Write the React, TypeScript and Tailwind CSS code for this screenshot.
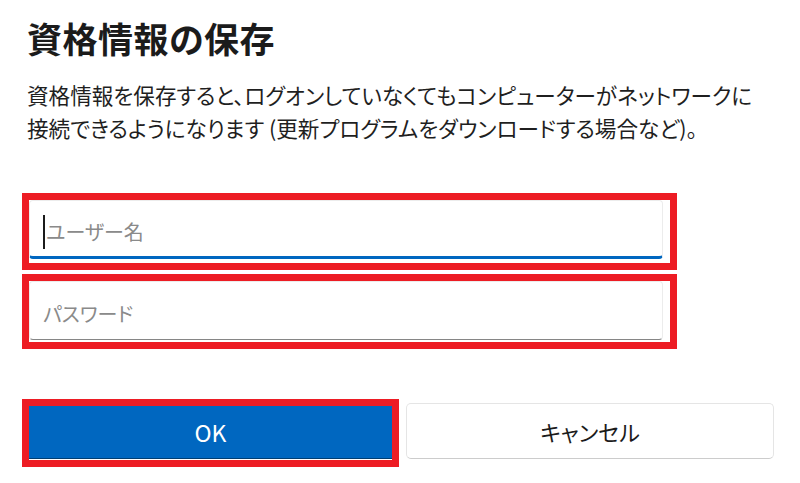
export default function App() {
  return (
    <div
      className="min-h-screen w-[800px] bg-white pl-[22px] pt-[14px] text-[#1b1b1b] [font-feature-settings:'palt']"
      style={{ fontFamily: '"Noto Sans CJK JP", "Noto Sans", sans-serif' }}
    >
      <h1 className="pl-[5px] text-[35px] font-semibold leading-[48px] tracking-[0.5px]">
        資格情報の保存
      </h1>

      <p className="mt-[16px] pl-[5px] text-[21.6px] leading-[33px] text-[#1f1f1f]">
        資格情報を保存すると、ログオンしていなくてもコンピューターがネットワークに
        <br />
        接続できるようになります (更新プログラムをダウンロードする場合など)。
      </p>

      <div className="mt-[49px] flex flex-col gap-[4px]">
        <div className="h-[77px] w-[655px] border-[7px] border-[#ed1c24] pr-[7px]">
          <div className="flex h-[59px] items-center rounded-[4px] border border-[#ececec] border-b-[3px] border-b-[#0067c0] pl-[13px] pt-[6px]">
            <span className="mr-[1px] h-[34px] w-[2px] bg-[#1b1b1b]" />
            <span className="text-[20px] text-[#8a8a8a]">ユーザー名</span>
          </div>
        </div>
        <div className="h-[75px] w-[655px] border-[7px] border-[#ed1c24] pr-[7px]">
          <div className="flex h-[59px] items-center rounded-[4px] border border-[#ececec] border-b-[#868686] pl-[13px] pt-[6px]">
            <span className="text-[20px] text-[#8a8a8a]">パスワード</span>
          </div>
        </div>
      </div>

      <div className="mt-[50px] flex items-center gap-[7px]">
        <div className="h-[68px] w-[377px] border-[7px] border-[#ed1c24]">
          <div className="flex h-[53px] items-center justify-center border-b border-b-[#003e73] bg-[#0067c0] text-[23px] text-white">
            OK
          </div>
        </div>
        <div className="-mt-[4px] flex h-[56px] w-[368px] items-center justify-center rounded-[5px] border border-[#e5e5e5] border-b-[#cccccc] bg-white text-[22px] text-[#1b1b1b]">
          キャンセル
        </div>
      </div>
    </div>
  );
}
